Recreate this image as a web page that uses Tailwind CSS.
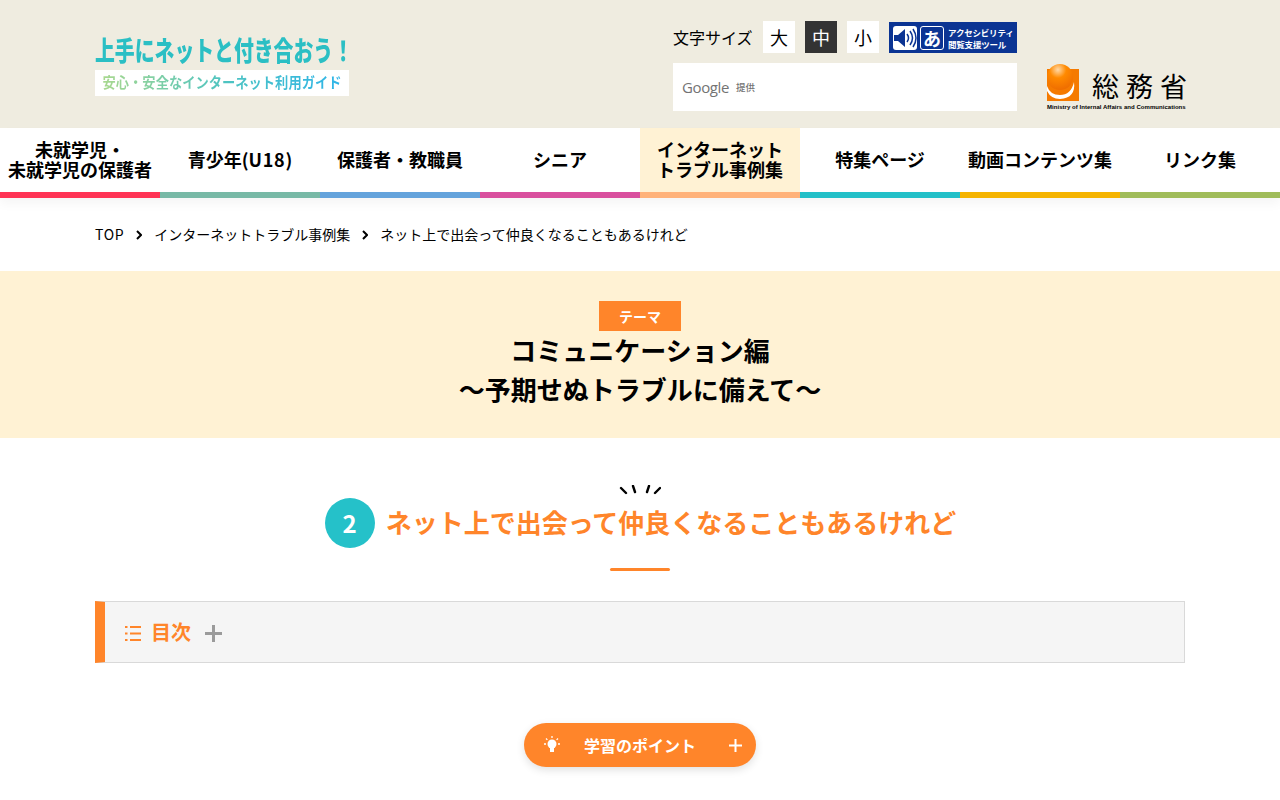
<!DOCTYPE html>
<html lang="ja">
<head>
<meta charset="utf-8">
<title>上手にネットと付き合おう！</title>
<script src="https://cdn.jsdelivr.net/npm/@tailwindcss/browser@4"></script>
</head>
<body class="bg-white text-black font-['Noto_Sans_CJK_JP','Noto_Sans',sans-serif]">
<div class="h-[800px] w-[1280px] overflow-hidden">
  <header class="h-[128px] bg-[#efece0] flex pl-[95px] pr-[95px]">
    <div class="w-[578px] pt-[32px] shrink-0">
      <div class="h-[35px] text-[27px] leading-[35px] font-black text-[#2bbfc4] whitespace-nowrap origin-left scale-x-[0.735]">上手にネットと付き合おう！</div>
      <div class="w-[254px] h-[26px] mt-[3px] pb-[2px] bg-white flex items-center justify-center">
        <span class="text-[15px] leading-[24px] font-bold whitespace-nowrap bg-[linear-gradient(90deg,#a8d88f,#4fc4c0,#2fb5e8)] bg-clip-text text-transparent scale-x-[0.885]">安心・安全なインターネット利用ガイド</span>
      </div>
    </div>
    <div class="w-[344px] pt-[21px] shrink-0">
      <div class="flex items-center h-[32px]">
        <span class="text-[16px] w-[90px] whitespace-nowrap">文字サイズ</span>
        <span class="w-[32px] h-[32px] bg-white flex items-center justify-center text-[18px]">大</span>
        <span class="w-[32px] h-[32px] bg-[#333] text-white flex items-center justify-center text-[18px] ml-[10px]">中</span>
        <span class="w-[32px] h-[32px] bg-white flex items-center justify-center text-[18px] ml-[10px]">小</span>
        <div class="ml-[10px] w-[128px] h-[31px] mt-[1px] bg-[#0b3493] flex items-center pl-[4px] gap-[3px] text-white">
          <svg width="24" height="24" viewBox="0 0 24 24" class="shrink-0"><rect width="24" height="24" rx="3" fill="#fff"/><path d="M1 9h4l7-6v18l-7-6H1z" fill="#0b3493"/><path d="M14 8q3 4 0 8M17 5q5 7 0 14M20 3q6 9 0 18" fill="none" stroke="#0b3493" stroke-width="1.5"/></svg>
          <span class="w-[24px] h-[24px] rounded-[3px] border border-white flex items-center justify-center text-[18px] leading-none font-bold shrink-0">あ</span>
          <span class="text-[8.5px] leading-[12px] font-bold whitespace-nowrap ml-[1px] tracking-[-0.2px]">アクセシビリティ<br>閲覧支援ツール</span>
        </div>
      </div>
      <div class="h-[48px] mt-[10px] bg-white flex items-center pl-[9px] text-[#737373]">
        <span class="font-['Open_Sans'] text-[15px] tracking-[-0.4px]">Google</span>
        <span class="text-[9.5px] ml-[7px] font-medium">提供</span>
      </div>
    </div>
    <div class="flex-1 pl-[30px] pt-[64px]">
      <div class="flex h-[37px]">
        <svg width="32" height="37" viewBox="0 0 32 37" class="shrink-0">
          <defs><radialGradient id="sphere" cx="0.42" cy="0.22" r="0.8"><stop offset="0" stop-color="#ffd9a8"/><stop offset="0.4" stop-color="#ff8a00"/><stop offset="1" stop-color="#ee6c00"/></radialGradient></defs>
          <rect y="5" width="32" height="32" fill="#f57a00"/>
          <path d="M0 22q3 9 13 9q11 0 14-13q2 16-14 17q-9 0-13-8z" fill="#fff"/>
          <circle cx="13" cy="13" r="13" fill="url(#sphere)"/>
        </svg>
        <span class="ml-[13px] mt-[6px] text-[27px] leading-[32px] font-normal tracking-[7px] whitespace-nowrap">総務省</span>
      </div>
      <div class="mt-[2px] text-[6px] leading-[8px] font-bold font-['Liberation_Sans'] whitespace-nowrap tracking-[0.04px]">Ministry of Internal Affairs and Communications</div>
    </div>
  </header>

  <nav class="grid grid-cols-8 h-[70px] text-[18px] leading-[20px] font-bold text-center shadow-[0_6px_10px_rgba(0,0,0,0.04)] relative">
    <a class="flex items-center justify-center pb-[2px] border-b-[6px] border-[#ff3355]">未就学児・<br>未就学児の保護者</a>
    <a class="flex items-center justify-center pb-[2px] border-b-[6px] border-[#78b9a6]">青少年(<span class="tracking-[0.7px]">U18</span>)</a>
    <a class="flex items-center justify-center pb-[2px] border-b-[6px] border-[#64a3dc]">保護者・教職員</a>
    <a class="flex items-center justify-center pb-[2px] border-b-[6px] border-[#d94f9e]">シニア</a>
    <a class="flex items-center justify-center pb-[2px] border-b-[6px] border-[#ffb27a] bg-[#fff2d4]">インターネット<br>トラブル事例集</a>
    <a class="flex items-center justify-center pb-[2px] border-b-[6px] border-[#22c0c8]">特集ページ</a>
    <a class="flex items-center justify-center pb-[2px] border-b-[6px] border-[#f5b400]">動画コンテンツ集</a>
    <a class="flex items-center justify-center pb-[2px] border-b-[6px] border-[#a0bc5a]">リンク集</a>
  </nav>

  <div class="h-[73px] pl-[95px] flex items-center text-[14px]">
    <span class="tracking-[0.7px]">TOP</span>
    <svg width="6" height="10" viewBox="0 0 6 10" class="mx-[12px]"><path d="M1 1l4 4-4 4" fill="none" stroke="#000" stroke-width="2"/></svg>
    <span>インターネットトラブル事例集</span>
    <svg width="6" height="10" viewBox="0 0 6 10" class="mx-[12px]"><path d="M1 1l4 4-4 4" fill="none" stroke="#000" stroke-width="2"/></svg>
    <span>ネット上で出会って仲良くなることもあるけれど</span>
  </div>

  <section class="h-[167px] bg-[#fff2d4] pt-[30px] flex flex-col items-center">
    <span class="w-[82px] h-[30px] bg-[#ff852a] text-white text-[14px] font-bold flex items-center justify-center">テーマ</span>
    <h1 class="text-[26px] leading-[39px] font-bold text-center -mt-[1px]">コミュニケーション編<br>〜予期せぬトラブルに備えて〜</h1>
  </section>

  <section class="pt-[60px] flex flex-col items-center relative">
    <svg width="42" height="12" viewBox="0 0 42 12" class="absolute left-[619px] top-[47px]"><path d="M2 3l5 5M14 1l2 6M28 7l2-6M36 8l5-5" fill="none" stroke="#000" stroke-width="2.4" stroke-linecap="round"/></svg>
    <div class="flex items-center gap-[11px] h-[50px]">
      <span class="w-[50px] h-[50px] rounded-full bg-[#25c1c9] text-white text-[24px] font-bold flex items-center justify-center">2</span>
      <h2 class="text-[26px] leading-[36px] font-bold text-[#ff852a] whitespace-nowrap -mt-[3px] -mr-[1px]">ネット上で出会って仲良くなることもあるけれど</h2>
    </div>
    <div class="w-[60px] h-[3px] rounded-full bg-[#ff852a] mt-[20px]"></div>
  </section>

  <div class="mx-[95px] mt-[30px] h-[62px] bg-[#f5f5f5] border border-[#d9d9d9] border-l-[10px] border-l-[#ff852a] flex items-center pl-[20px]">
    <svg width="16" height="15" viewBox="0 0 16 15" class="mt-[2px]"><path d="M5 1h11M5 7.500h11M5 14h11" stroke="#ff852a" stroke-width="2"/><path d="M0 1h2.500M0 7.500h2.500M0 14h2.500" stroke="#ff852a" stroke-width="2"/></svg>
    <span class="ml-[10px] text-[20px] font-bold text-[#ff852a]">目次</span>
    <svg width="17" height="17" viewBox="0 0 17 17" class="ml-[14px] mt-[2px]"><path d="M8.500 0v17M0 8.500h17" stroke="#9b9b9b" stroke-width="3"/></svg>
  </div>

  <div class="flex justify-center mt-[60px]">
    <div class="w-[232px] h-[44px] rounded-full bg-[#ff852a] text-white flex items-center pl-[20px] pr-[14px] shadow-[0_3px_8px_rgba(0,0,0,0.12)]">
      <svg width="16" height="18" viewBox="0 0 16 18" class="shrink-0"><circle cx="8" cy="8" r="4.500" fill="#fff"/><path d="M6 12h4v4H6z" fill="#fff"/><path d="M8 0v2M2 2.500l1.400 1.400M14 2.500l-1.400 1.400M0 8h2M14 8h2" stroke="#fff" stroke-width="1.300"/></svg>
      <span class="ml-[24px] text-[16px] font-bold whitespace-nowrap">学習のポイント</span>
      <svg width="13" height="13" viewBox="0 0 13 13" class="ml-auto"><path d="M6.500 0v13M0 6.500h13" stroke="#fff" stroke-width="2"/></svg>
    </div>
  </div>
</div>
</body>
</html>
